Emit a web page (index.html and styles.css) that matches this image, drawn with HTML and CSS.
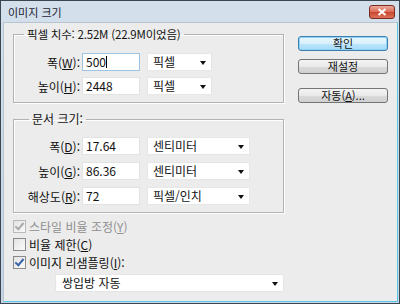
FILE: index.html
```html
<!DOCTYPE html>
<html lang="ko">
<head>
    <meta charset="UTF-8">
    <title>이미지 크기</title>
    <link rel="stylesheet" href="styles.css">
</head>
<body>
    <div class="window">
        <div class="titlebar">
            <span class="title">이미지 크기</span>
            <div class="close-btn">
                <svg width="10" height="8" viewBox="0 0 10 8">
                    <path d="M1.5 1 L8.5 7 M8.5 1 L1.5 7" stroke="#fff" stroke-width="2"/>
                </svg>
            </div>
        </div>

        <div class="client">
            <div class="main">
                <fieldset class="group group-pixel">
                    <legend>픽셀 치수: 2.52M (22.9M이었음)</legend>
                    <div class="row">
                        <label>폭(<u>W</u>):</label>
                        <div class="field focus">500<span class="caret"></span></div>
                        <div class="select short">픽셀<span class="arrow"></span></div>
                    </div>
                    <div class="row">
                        <label>높이(<u>H</u>):</label>
                        <div class="field">2448</div>
                        <div class="select short">픽셀<span class="arrow"></span></div>
                    </div>
                </fieldset>

                <fieldset class="group group-doc">
                    <legend>문서 크기:</legend>
                    <div class="row">
                        <label>폭(<u>D</u>):</label>
                        <div class="field">17.64</div>
                        <div class="select">센티미터<span class="arrow"></span></div>
                    </div>
                    <div class="row">
                        <label>높이(<u>G</u>):</label>
                        <div class="field">86.36</div>
                        <div class="select">센티미터<span class="arrow"></span></div>
                    </div>
                    <div class="row">
                        <label>해상도(<u>R</u>):</label>
                        <div class="field">72</div>
                        <div class="select">픽셀/인치<span class="arrow"></span></div>
                    </div>
                </fieldset>

                <div class="checks">
                    <div class="check disabled">
                        <span class="box checked"></span>스타일 비율 조정(<u>Y</u>)
                    </div>
                    <div class="check">
                        <span class="box"></span>비율 제한(<u>C</u>)
                    </div>
                    <div class="check">
                        <span class="box checked"></span>이미지 리샘플링(<u>I</u>):
                    </div>
                </div>

                <div class="select wide">쌍입방 자동<span class="arrow"></span></div>
            </div>

            <div class="buttons">
                <div class="btn default">확인</div>
                <div class="btn">재설정</div>
                <div class="btn auto">자동(<u>A</u>)...</div>
            </div>
        </div>
    </div>
</body>
</html>
```

FILE: styles.css
```css
body {
    margin: 0;
    padding: 0;
    font-family: "Noto Sans CJK KR", "Noto Sans", sans-serif;
    font-size: 12px;
    color: #111;
}

.window {
    width: 400px;
    height: 304px;
    box-sizing: border-box;
    border: 1px solid #3b4651;
    background: linear-gradient(to bottom, #d3e0ec, #c6d6e6);
    display: flex;
    flex-direction: column;
}

.titlebar {
    height: 21px;
    display: flex;
    align-items: center;
    justify-content: space-between;
    padding: 0 4px 0 7px;
}

.title {
    font-size: 11px;
    color: #1c2430;
    line-height: 14px;
}

.close-btn {
    width: 26px;
    height: 14px;
    box-sizing: border-box;
    border: 1px solid #7d2a20;
    border-radius: 3px;
    background: linear-gradient(to bottom, #eba99b, #da6a55 50%, #c9452d 51%, #dc735c);
    display: flex;
    align-items: center;
    justify-content: center;
}

.client {
    flex: 1;
    margin: 0 1px 1px 2px;
    background: #ececec;
    border: 1px solid #b7c3cf;
    border-right-color: #58c8e6;
    border-bottom-color: #58c8e6;
    display: flex;
    padding: 3px 0 0 9px;
}

.main {
    width: 271px;
    display: flex;
    flex-direction: column;
}

.group {
    margin: 0;
    padding: 0 0 7px 0;
    border: 1px solid #b3b3b3;
    box-shadow: inset 1px 1px 0 #fff, 1px 1px 0 #fff;
}

.group legend {
    padding: 0 3px;
    line-height: 16px;
    font-size: 12px;
}

.group-pixel legend {
    margin-left: 10px;
    font-size: 11.5px;
    letter-spacing: -0.2px;
}

.group-pixel .row:first-of-type {
    margin-top: 11px;
}

.group-pixel .row + .row {
    margin-top: 6px;
}

.group-doc {
    margin-top: 8px;
}

.group-doc legend {
    margin-left: 15px;
}

.group-doc .row:first-of-type {
    margin-top: 10px;
}

.group-doc .row + .row {
    margin-top: 7px;
}

.row {
    display: flex;
    align-items: center;
    height: 18px;
}

.row label {
    width: 66px;
    text-align: right;
    white-space: nowrap;
}

.field {
    margin-left: 2px;
    width: 58px;
    height: 18px;
    box-sizing: border-box;
    background: #fff;
    border: 1px solid #e2e2e2;
    padding-left: 3px;
    line-height: 16px;
    display: flex;
    align-items: center;
}

.field.focus {
    border-color: #9fc3e3;
}

.caret {
    width: 1px;
    height: 12px;
    background: #000;
}

.select {
    position: relative;
    margin-left: 7px;
    width: 103px;
    height: 18px;
    box-sizing: border-box;
    background: #fff;
    border: 1px solid #e6e6e6;
    padding-left: 5px;
    line-height: 16px;
}

.select.short {
    width: 65px;
}

.select.wide {
    margin: 0 0 0 42px;
    width: 229px;
    padding-left: 6px;
}

.arrow {
    position: absolute;
    right: 5px;
    top: 7px;
    width: 0;
    height: 0;
    border-left: 3px solid transparent;
    border-right: 3px solid transparent;
    border-top: 4px solid #111;
}

.checks {
    margin-top: 4px;
    display: flex;
    flex-direction: column;
    margin-bottom: 3px;
}

.check {
    display: flex;
    align-items: center;
    height: 18px;
}

.check.disabled {
    color: #8f8f8f;
}

.box {
    width: 11px;
    height: 11px;
    border: 1px solid #8b8b8b;
    background: linear-gradient(135deg, #e3e3e3, #fafafa);
    margin-right: 3px;
    position: relative;
}

.box.checked::after {
    content: '';
    position: absolute;
    left: 3px;
    top: 0;
    width: 3px;
    height: 7px;
    border-right: 2px solid #3a64a8;
    border-bottom: 2px solid #3a64a8;
    transform: rotate(40deg);
}

.check.disabled .box {
    border-color: #b9b9b9;
}

.check.disabled .box.checked::after {
    border-color: #a9a9a9;
}

.buttons {
    margin-left: 14px;
    margin-top: 10px;
    display: flex;
    flex-direction: column;
}

.btn {
    width: 90px;
    height: 15px;
    box-sizing: border-box;
    border: 1px solid #747474;
    border-radius: 3px;
    background: linear-gradient(to bottom, #f4f4f4, #e9e9e9 50%, #dadada 51%, #d0d0d0);
    text-align: center;
    font-size: 11px;
    line-height: 13px;
}

.btn.default {
    border-color: #3c7fb1;
    box-shadow: inset 0 0 0 1px #8fd3f5;
    background: linear-gradient(to bottom, #eaf6fd, #d9f0fc 50%, #bee6fd 51%, #a7d9f5);
}

.btn + .btn {
    margin-top: 8px;
}

.btn.auto {
    margin-top: 14px;
}
```
